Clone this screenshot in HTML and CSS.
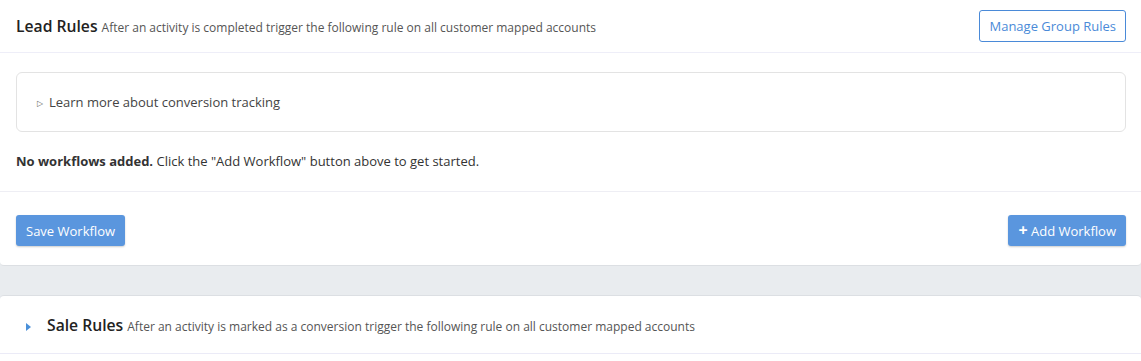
FILE: index.html
```html
<!DOCTYPE html>
<html>
<head>
    <title>Workflow Rules</title>
    <link rel="stylesheet" href="styles.css">
</head>
<body>
    <div class="card">
        <div class="card-header">
            <div class="card-title">
                <span class="title">Lead Rules</span>
                <span class="subtitle">After an activity is completed trigger the following rule on all customer mapped accounts</span>
            </div>
            <button class="btn-outline">Manage Group Rules</button>
        </div>
        <div class="card-body">
            <div class="info-box">
                <span class="caret-open">&#9655;</span>
                <span>Learn more about conversion tracking</span>
            </div>
            <p class="empty-msg"><strong>No workflows added.</strong> Click the "Add Workflow" button above to get started.</p>
        </div>
        <div class="card-footer">
            <button class="btn-primary">Save Workflow</button>
            <button class="btn-primary"><span class="plus">+</span> Add Workflow</button>
        </div>
    </div>

    <div class="card collapsed">
        <div class="card-header">
            <div class="card-title">
                <span class="caret-blue"></span>
                <span class="title">Sale Rules</span>
                <span class="subtitle">After an activity is marked as a conversion trigger the following rule on all customer mapped accounts</span>
            </div>
        </div>
    </div>
</body>
</html>
```

FILE: styles.css
```css
body {
    background-color: #e9ecef;
    color: #333333;
    font-family: 'Open Sans', sans-serif;
    margin: 0;
    padding: 0;
}

.card {
    background-color: #ffffff;
    border-bottom: 1px solid #dcdfe3;
    border-radius: 0 0 4px 4px;
}

.card.collapsed {
    margin-top: 29px;
    padding-bottom: 20px;
    border-radius: 4px 4px 0 0;
    border-top: 1px solid #dcdfe3;
    border-bottom: none;
}

.card-header {
    display: flex;
    align-items: center;
    justify-content: space-between;
    height: 52px;
    padding: 0 15px 0 16px;
    border-bottom: 1px solid #eeeef8;
}

.collapsed .card-header {
    height: 57px;
    padding-left: 24px;
    border-bottom: 1px solid #ebebf7;
}

.card-title {
    display: flex;
    align-items: baseline;
}

.title {
    font-size: 15.7px;
    font-weight: 600;
    color: #222222;
    margin-right: 4px;
}

.subtitle {
    font-size: 12px;
    color: #555555;
}

.caret-blue {
    display: inline-block;
    width: 0;
    height: 0;
    border-left: 5px solid #4a90d9;
    border-top: 4.5px solid transparent;
    border-bottom: 4.5px solid transparent;
    margin-left: 2px;
    margin-right: 16px;
}

.btn-outline {
    font-family: 'Open Sans', sans-serif;
    font-size: 13px;
    color: #4a8ad8;
    background-color: #ffffff;
    border: 1px solid #4a8ad8;
    border-radius: 3px;
    height: 32px;
    padding: 0 9px;
}

.card-body {
    padding: 19px 15px 0 16px;
    border-bottom: 1px solid #eeeef4;
}

.info-box {
    display: flex;
    align-items: center;
    height: 58px;
    border: 1px solid #e3e3e3;
    border-radius: 6px;
    padding-left: 20px;
    font-size: 13px;
    color: #444444;
}

.caret-open {
    font-size: 8px;
    color: #666666;
    margin-right: 6px;
}

.empty-msg {
    font-size: 13px;
    color: #333333;
    margin: 20px 0 21px;
}

.empty-msg strong {
    font-weight: 700;
}

.card-footer {
    display: flex;
    justify-content: space-between;
    padding: 23px 15px 19px 16px;
}

.btn-primary {
    font-family: 'Open Sans', sans-serif;
    font-size: 13px;
    color: #ffffff;
    background-color: #5a96de;
    border: none;
    border-radius: 3px;
    height: 31px;
    padding: 0 10px;
    box-shadow: 0 1px 2px rgba(0, 0, 0, 0.2);
}

.plus {
    font-weight: 700;
    font-size: 16px;
    line-height: 1;
}
```
